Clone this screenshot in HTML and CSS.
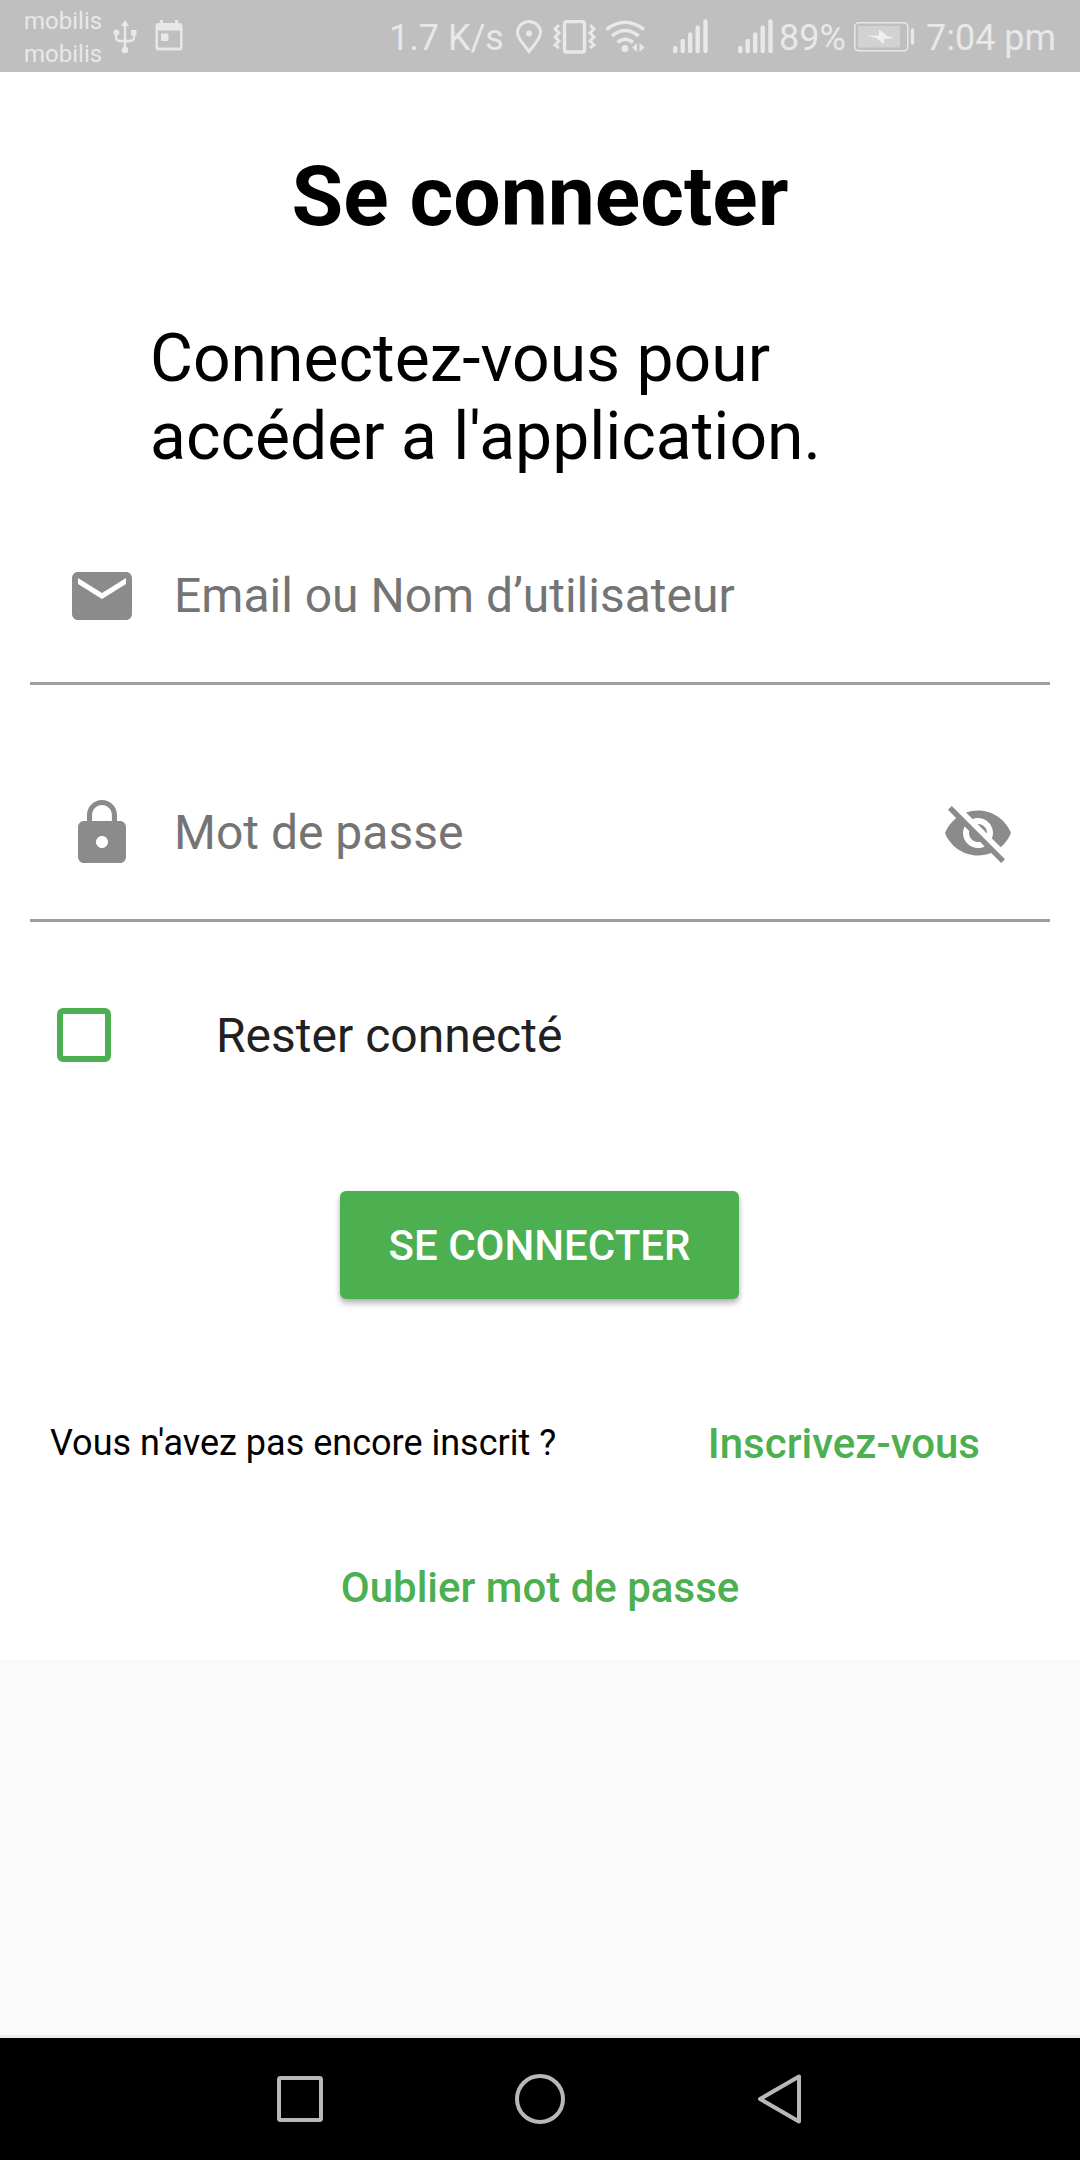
FILE: index.html
```html
<!DOCTYPE html>
<html lang="fr">
<head>
<meta charset="utf-8">
<title>Se connecter</title>
<link rel="stylesheet" href="styles.css">
</head>
<body>
<div class="screen">
  <header class="status">
    <div class="carriers"><span>mobilis</span><span>mobilis</span></div>
    <svg class="usb" width="24" height="34" viewBox="0 0 24 34"><path d="M12 5v24M3 13v4q0 4 4 4h10q4 0 4-4v-4" fill="none" stroke="currentColor" stroke-width="2.400"/><path d="M12 0l4 6H8z" fill="currentColor"/><circle cx="3.400" cy="12.500" r="3" fill="currentColor"/><path d="M18 10h5.500v5.500H18z" fill="currentColor"/><circle cx="12" cy="30" r="3.300" fill="currentColor"/></svg>
    <svg class="calendar" width="28" height="31" viewBox="0 0 28 31"><path d="M5 0h3v3h12V0h3v3h1.500q3 0 3 3v21.500q0 3-3 3h-21q-3 0-3-3V6q0-3 3-3H5zM3 10.500v17h22v-17z" fill="currentColor" fill-rule="evenodd"/><rect x="6" y="13.500" width="7.500" height="7.500" fill="currentColor"/></svg>
    <span class="speed">1.7 K/s</span>
    <svg class="pin" width="28" height="34" viewBox="0 0 28 34"><path d="M14 31.500C10 26 2.500 19 2.500 12.500a11.500 11 0 0 1 23 0C25.500 19 18 26 14 31.500z" fill="none" stroke="currentColor" stroke-width="3"/><circle cx="14" cy="13.500" r="3" fill="currentColor"/></svg>
    <svg class="vibrate" width="44" height="34" viewBox="0 0 44 34"><rect x="11.500" y="1.500" width="20" height="30.500" rx="2" fill="none" stroke="currentColor" stroke-width="3.400"/><path d="M6 5l-4 4 4 4-4 4 4 4-4 4 4 3M37 5l4 4-4 4 4 4-4 4 4 4-4 3" fill="none" stroke="currentColor" stroke-width="3"/></svg>
    <svg class="wifi" width="42" height="34" viewBox="0 0 42 34"><path d="M1.500 9.500Q20 -5 39 9.500M7 16Q20 5 33.500 16M12.500 22.500Q20 16 28 22.500" fill="none" stroke="currentColor" stroke-width="3.600"/><circle cx="20" cy="28.500" r="3.500" fill="currentColor"/><path d="M32 23v9l-5-4.500zM34.500 23v9l5-4.500z" fill="currentColor"/></svg>
    <svg class="signal" width="36" height="34" viewBox="0 0 36 34"><path d="M2.300 29v3M9.700 22v10M17.200 15.500V32M24.700 8.500V32M32.500 2.500V32" stroke="currentColor" stroke-width="4.400" stroke-linecap="round"/></svg>
    <svg class="signal signal-two" width="36" height="34" viewBox="0 0 36 34"><path d="M2.300 29v3M9.700 22v10M17.200 15.500V32M24.700 8.500V32M32.500 2.500V32" stroke="currentColor" stroke-width="4.400" stroke-linecap="round"/></svg>
    <span class="percent">89%</span>
    <svg class="battery" width="61" height="30" viewBox="0 0 61 30"><rect x=".8" y=".8" width="53" height="28" rx="4" fill="none" stroke="currentColor" stroke-width="1.500"/><rect x="4" y="4" width="42" height="21.500" fill="#d2d2d2"/><path d="M58.500 8v13" stroke="currentColor" stroke-width="3.400" stroke-linecap="round"/><path d="M13 13.500h12V8l7 4.500v1l8 2.500-10 1v5l-6-4.500v-1z" fill="#f0f0f0"/></svg>
    <span class="clock">7:04 pm</span>
  </header>
  <main class="login">
    <h1 class="title">Se connecter</h1>
    <p class="intro">Connectez-vous pour<br>accéder a l'application.</p>
    <div class="field">
      <svg class="icon" viewBox="0 0 24 24"><path d="M20 4H4c-1.100 0-1.990.9-1.990 2L2 18c0 1.100.9 2 2 2h16c1.100 0 2-.9 2-2V6c0-1.100-.9-2-2-2zm0 4l-8 5-8-5V6l8 5 8-5v2z"/></svg>
      <span class="hint">Email ou Nom d’utilisateur</span>
    </div>
    <div class="field">
      <svg class="icon" viewBox="0 0 24 24"><path d="M18 8h-1V6c0-2.760-2.240-5-5-5S7 3.240 7 6v2H6c-1.100 0-2 .9-2 2v10c0 1.100.9 2 2 2h12c1.100 0 2-.9 2-2V10c0-1.100-.9-2-2-2zm-6 9c-1.100 0-2-.9-2-2s.9-2 2-2 2 .9 2 2-.9 2-2 2zm3.300-9H8.700V6c0-1.820 1.480-3.300 3.300-3.300 1.820 0 3.300 1.480 3.300 3.300v2z"/></svg>
      <span class="hint">Mot de passe</span>
      <svg class="icon" viewBox="0 0 24 24"><path d="M12 7c2.760 0 5 2.240 5 5 0 .65-.13 1.260-.36 1.830l2.920 2.920c1.510-1.260 2.700-2.890 3.430-4.750-1.730-4.390-6-7.500-11-7.500-1.400 0-2.740.25-3.980.7l2.160 2.160C10.740 7.130 11.350 7 12 7zM2 4.270l2.280 2.280.46.46C3.080 8.300 1.780 10.020 1 12c1.730 4.390 6 7.500 11 7.500 1.550 0 3.030-.3 4.380-.84l.42.42L19.730 22 21 20.730 3.270 3 2 4.270zM7.530 9.800l1.550 1.550c-.05.21-.08.43-.08.650 0 1.660 1.340 3 3 3 .22 0 .44-.03.65-.08l1.550 1.550c-.67.33-1.410.53-2.200.53-2.760 0-5-2.240-5-5 0-.79.2-1.530.53-2.200zm4.310-.78l3.150 3.150.02-.16c0-1.660-1.340-3-3-3l-.17.01z"/></svg>
    </div>
    <label class="remember"><span class="box"></span><span class="remember-text">Rester connecté</span></label>
    <button class="submit">SE CONNECTER</button>
    <div class="signup"><span class="question">Vous n'avez pas encore inscrit ?</span><a class="link">Inscrivez-vous</a></div>
    <a class="link forgot">Oublier mot de passe</a>
  </main>
  <div class="rest"></div>
  <nav class="navbar">
    <svg width="56" height="56" viewBox="0 0 56 56"><rect x="7" y="7" width="42" height="42" rx="1.500"/></svg>
    <svg width="56" height="56" viewBox="0 0 56 56"><circle cx="28" cy="28" r="23"/></svg>
    <svg width="56" height="56" viewBox="0 0 56 56"><path d="M47 5.500v45L8 28z"/></svg>
  </nav>
</div>
</body>
</html>
```
FILE: styles.css
```css
* { box-sizing: border-box; }
body { margin: 0; background: #fafafa; font-family: Roboto, sans-serif; color: #000; }
.screen { width: 1080px; height: 2160px; display: flex; flex-direction: column; overflow: hidden; }
.screen svg { flex: none; display: block; }

.status { height: 72px; flex: none; display: flex; align-items: flex-start; padding: 0 0 0 24px; background: #bfbfbf; color: #e8e8e8; white-space: nowrap; }
.status span { display: block; }
.carriers { width: 78px; padding-top: 5px; font-size: 24px; line-height: 33px; }
.usb { margin: 20px 0 0 11px; }
.calendar { margin: 20px 0 0 18px; }
.speed, .percent, .clock { font-size: 36px; line-height: 42px; padding-top: 17px; }
.speed { width: 116px; margin-left: 206px; }
.pin { margin: 20px 0 0 10px; }
.vibrate { margin: 20px 0 0 10px; }
.wifi { margin: 20px 0 0 8px; }
.signal { margin: 19px 0 0 26px; }
.signal-two { margin-left: 29px; }
.percent { width: 68px; margin-left: 5px; }
.battery { margin: 22px 0 0 7px; }
.clock { margin-left: 11px; }

.login { height: 1588px; flex: none; display: flex; flex-direction: column; background: #fff; padding: 75px 30px 0; }
.title { margin: 0; font-size: 84px; line-height: 100px; font-weight: 700; text-align: center; }
.intro { margin: 73px 0 0 120px; font-size: 66px; line-height: 78px; }
.field { height: 237px; flex: none; display: flex; align-items: flex-end; gap: 36px; padding: 0 36px 50px; border-bottom: 3px solid #9e9e9e; }
.intro + .field { height: 209px; }
.icon { width: 72px; height: 72px; fill: #8b8b8b; }
.hint { flex: 1; font-size: 48px; line-height: 72px; color: #747474; }
.remember { display: flex; align-items: center; height: 54px; margin: 86px 0 0 27px; }
.box { width: 54px; height: 54px; border: 6px solid #4caf50; border-radius: 6px; }
.remember-text { margin-left: 105px; padding-top: 2px; font-size: 48px; line-height: 54px; color: #212121; }
.submit { align-self: center; width: 399px; height: 108px; flex: none; margin: 129px 1px 0 0; padding: 2px 0 0; border: 0; border-radius: 6px; background: #4caf50; color: #fff; font: 500 42px/106px Roboto, sans-serif; box-shadow: 0 5px 6px rgba(0,0,0,.2), 0 2px 5px rgba(0,0,0,.14); }
.signup { display: flex; align-items: center; height: 60px; margin: 115px 70px 0 20px; justify-content: space-between; }
.question { font-size: 36px; line-height: 58px; padding-bottom: 2px; }
.link { color: #4caf50; font-size: 42px; line-height: 60px; font-weight: 500; }
.forgot { align-self: center; margin-top: 84px; }
.rest { height: 378px; flex: none; background: #fafafa; border-bottom: 3px solid #ececec; }
.navbar { flex: 1; display: flex; align-items: center; justify-content: center; gap: 184px; background: #000; }
.navbar svg { fill: none; stroke: #b8b8b8; stroke-width: 4; stroke-linejoin: round; }
```
